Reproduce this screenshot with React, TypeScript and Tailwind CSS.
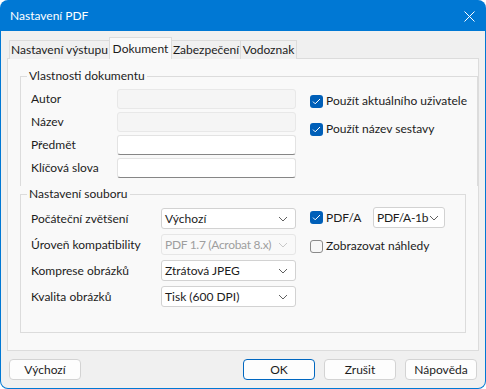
import React from 'react'

const font = "font-['Lato','Segoe_UI',sans-serif]"

function Chevron({ disabled }: { disabled?: boolean }) {
  return (
    <svg width="10" height="6" viewBox="0 0 10 6" className="shrink-0">
      <path d="M1 1l4 4 4-4" fill="none" stroke={disabled ? '#c8c8c8' : '#606060'} strokeWidth="1" />
    </svg>
  )
}

function Check({ checked, label }: { checked?: boolean; label: string }) {
  return (
    <div className="flex items-center gap-[3px]">
      {checked ? (
        <span className="w-[13px] h-[13px] rounded-[3px] bg-[#005fb8] flex items-center justify-center">
          <svg width="9" height="7" viewBox="0 0 9 7">
            <path d="M1 3.6l2.2 2.2L8 1" fill="none" stroke="#fff" strokeWidth="1" />
          </svg>
        </span>
      ) : (
        <span className="w-[13px] h-[13px] rounded-[3px] border border-[#8a8a8a] bg-[#f7f7f7]" />
      )}
      <span className="whitespace-nowrap">{label}</span>
    </div>
  )
}

function Select({ value, disabled, tight, className }: { value: string; disabled?: boolean; tight?: boolean; className: string }) {
  return (
    <div
      className={`${className} h-[21px] rounded-[3px] border flex items-center justify-between pl-[3px] ${
        disabled ? 'bg-[#f9f9f9] border-[#e6e6e6] text-[#9e9e9e]' : 'bg-white border-[#d2d2d2]'
      }`}
    >
      <span className={`whitespace-nowrap ${disabled || tight ? 'tracking-[-0.3px]' : ''}`}>{value}</span>
      <Chevron disabled={disabled} />
    </div>
  )
}

function Field({ label, enabled }: { label: string; enabled?: boolean }) {
  return (
    <div className="flex items-center h-[20px]">
      <span className="w-[86px]">{label}</span>
      <div
        className={`w-[179px] h-[20px] rounded-[3px] border ${
          enabled ? 'bg-white border-[#e3e3e3] border-b-[#868686]' : 'bg-[#f5f5f5] border-[#e8e8e8]'
        }`}
      />
    </div>
  )
}

export default function App() {
  const tabs = [
    { name: 'Nastavení výstupu', w: 'w-[101px]' },
    { name: 'Dokument', w: 'w-[63px]', active: true },
    { name: 'Zabezpečení', w: 'w-[70px]' },
    { name: 'Vodoznak', w: 'w-[57px]' },
  ]

  return (
    <div className={`${font} text-[12px] text-[#1c1c1c] w-[486px] h-[389px] bg-[#0078d4] rounded-[8px] p-px flex flex-col`}>
      {/* title bar */}
      <div className="h-[30px] flex items-center justify-between pl-[9px] pr-[10px] text-white">
        <span>Nastavení PDF</span>
        <svg width="11" height="11" viewBox="0 0 11 11">
          <path d="M0.5 0.5l10 10M10.5 0.5l-10 10" stroke="#fff" strokeWidth="1" />
        </svg>
      </div>

      <div className="flex-1 bg-[#f0f0f0] rounded-b-[7px] flex flex-col pt-[6px]">
        {/* tabs */}
        <div className="flex items-end h-[22px] pl-[8px] relative z-10">
          {tabs.map((t) =>
            t.active ? (
              <div
                key={t.name}
                className={`${t.w} h-[22px] bg-[#f9f9f9] border border-b-0 border-[#dcdcdc] flex items-start justify-center pt-[2px] -ml-px whitespace-nowrap`}
              >
                {t.name}
              </div>
            ) : (
              <div
                key={t.name}
                className={`${t.w} h-[19px] bg-[#f0f0f0] border border-b-0 border-[#dcdcdc] flex items-center justify-center -ml-px first:ml-0 whitespace-nowrap`}
              >
                {t.name}
              </div>
            )
          )}
        </div>

        {/* panel */}
        <div className="mx-[6px] -mt-px h-[293px] bg-[#f9f9f9] border border-[#dcdcdc] px-[12px] pt-[9px]">
          <fieldset className="border border-b-0 border-[#dcdcdc] px-[10px] pb-[8px]">
            <legend className="px-[2px] ml-[-4px] h-[16px] leading-[16px]">Vlastnosti dokumentu</legend>
            <div className="flex mt-[5px]">
              <div className="flex flex-col gap-[3px]">
                <Field label="Autor" />
                <Field label="Název" />
                <Field label="Předmět" enabled />
                <Field label="Klíčová slova" enabled />
              </div>
              <div className="flex flex-col gap-[10px] ml-[14px] pt-[3px]">
                <Check checked label="Použít aktuálního uživatele" />
                <Check checked label="Použít název sestavy" />
              </div>
            </div>
          </fieldset>

          <fieldset className="border border-[#dcdcdc] px-[10px] pb-[25px]">
            <legend className="px-[2px] ml-[-4px] h-[16px] leading-[16px]">Nastavení souboru</legend>
            <div className="flex mt-[6px]">
              <div className="flex flex-col gap-[5px]">
                <div className="flex items-center">
                  <span className="w-[130px]">Počáteční zvětšení</span>
                  <Select className="w-[135px] pr-[7px]" value="Výchozí" />
                </div>
                <div className="flex items-center">
                  <span className="w-[130px]">Úroveň kompatibility</span>
                  <Select className="w-[135px] pr-[7px]" value="PDF 1.7 (Acrobat 8.x)" disabled />
                </div>
                <div className="flex items-center">
                  <span className="w-[130px]">Komprese obrázků</span>
                  <Select className="w-[135px] pr-[7px]" value="Ztrátová JPEG" />
                </div>
                <div className="flex items-center">
                  <span className="w-[130px]">Kvalita obrázků</span>
                  <Select className="w-[135px] pr-[7px]" value="Tisk (600 DPI)" />
                </div>
              </div>
              <div className="flex flex-col ml-[14px]">
                <div className="flex items-center h-[21px] mt-[-1px]">
                  <div className="w-[63px]">
                    <Check checked label="PDF/A" />
                  </div>
                  <Select className="w-[72px] pr-[5px]" value="PDF/A-1b" tight />
                </div>
                <div className="mt-[9px]">
                  <Check label="Zobrazovat náhledy" />
                </div>
              </div>
            </div>
          </fieldset>
        </div>

        {/* buttons */}
        <div className="flex items-center px-[8px] mt-[8px]">
          <button className="w-[72px] h-[21px] rounded-[4px] border border-[#d3d3d3] bg-[#fdfdfd]">Výchozí</button>
          <div className="flex-1" />
          <div className="flex gap-[9px]">
            <button className="w-[72px] h-[21px] rounded-[4px] border border-[#0067c0] bg-[#fdfdfd]">OK</button>
            <button className="w-[72px] h-[21px] rounded-[4px] border border-[#d3d3d3] bg-[#fdfdfd]">Zrušit</button>
            <button className="w-[72px] h-[21px] rounded-[4px] border border-[#d3d3d3] bg-[#fdfdfd]">Nápověda</button>
          </div>
        </div>
      </div>
    </div>
  )
}
